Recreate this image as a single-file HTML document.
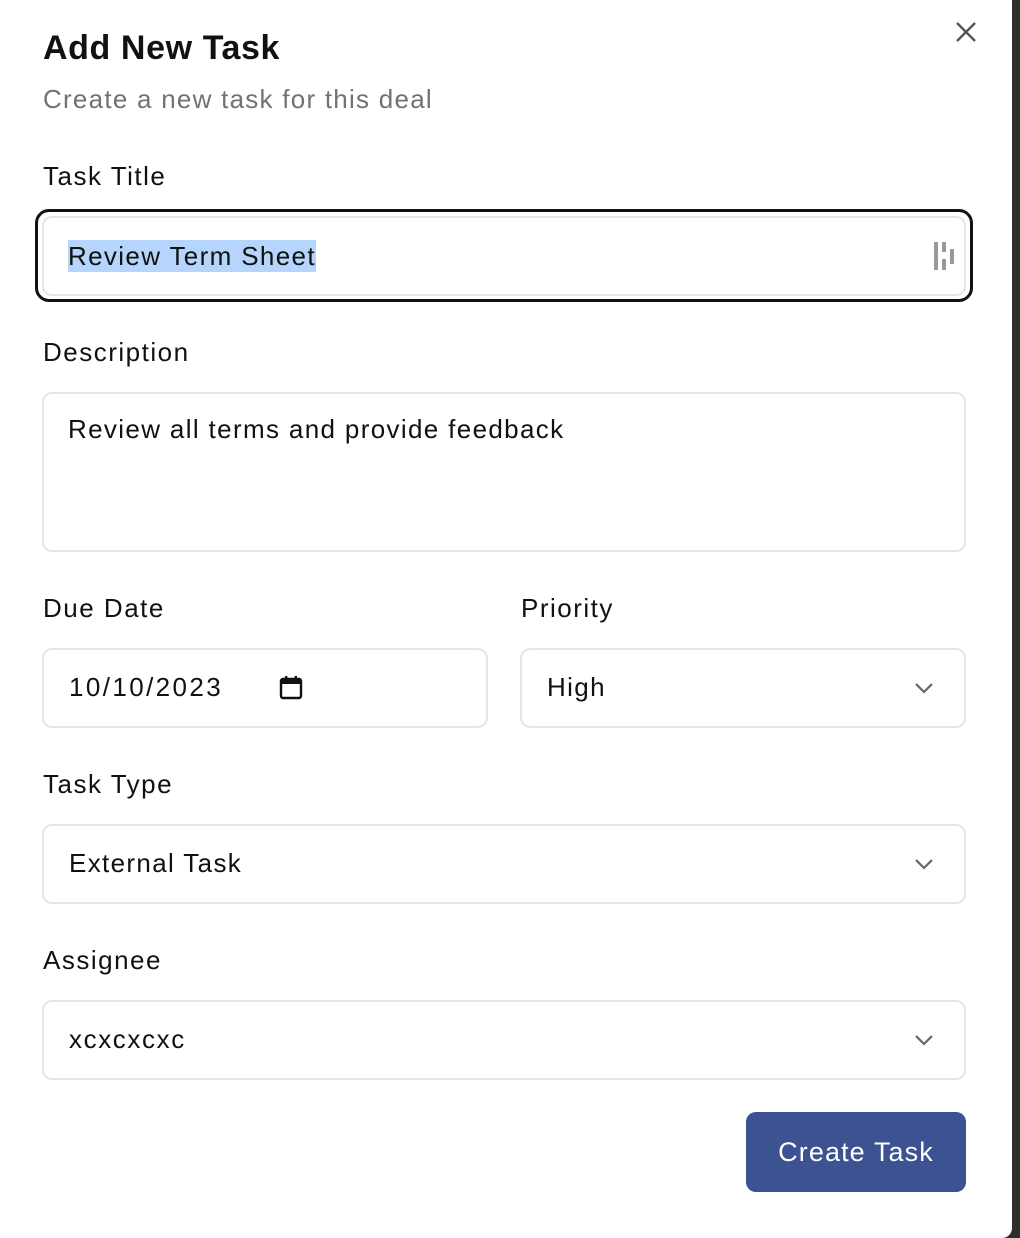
<!DOCTYPE html>
<html><head><style>
*{margin:0;padding:0;box-sizing:border-box}
body{width:1020px;height:1238px;background:#fff;font-family:"Liberation Sans",sans-serif;color:#111;position:relative;overflow:hidden}
.a{position:absolute;white-space:nowrap}
.lbl{font-size:26px;color:#111;letter-spacing:1.5px}
.box{position:absolute;border:2px solid #e5e5e5;border-radius:10px;background:#fff}
.txt{font-size:26px;color:#111;letter-spacing:1.35px}
.chev{position:absolute;width:24px;height:24px}
</style></head><body>
<div style="position:absolute;right:0;top:0;width:8px;height:1238px;background:#2e2e2e"></div>
<div style="position:absolute;right:8px;bottom:0;width:10px;height:10px;background:#fff;border-bottom-right-radius:10px;box-shadow:4px 4px 0 4px #2e2e2e"></div>

<div class="a" style="left:43px;top:29px;font-size:34px;font-weight:bold;letter-spacing:0.6px">Add New Task</div>
<div class="a" style="left:43px;top:84px;font-size:26px;color:#76716c;letter-spacing:1.25px">Create a new task for this deal</div>
<svg class="a" style="left:954px;top:20px" width="24" height="24" viewBox="0 0 24 24"><path d="M3 3L21 21M21 3L3 21" stroke="#555" stroke-width="2.4"/></svg>

<div class="a lbl" style="left:43px;top:161px">Task Title</div>
<div style="position:absolute;left:35px;top:209px;width:938px;height:93px;border:3px solid #111;border-radius:14px"></div>
<div class="box" style="left:42px;top:216px;width:924px;height:80px"></div>
<div class="a" style="left:68px;top:240px;width:248px;height:32px;background:#b5d5fc"></div>
<div class="a txt" style="left:68px;top:240px;line-height:32px">Review Term Sheet</div>
<svg class="a" style="left:930px;top:240px" width="30" height="34"><rect x="4" y="2" width="4" height="28" fill="#9a9794"/><rect x="12" y="2" width="4" height="10" fill="#9a9794"/><rect x="12" y="19" width="4" height="11" fill="#9a9794"/><rect x="20" y="9" width="4" height="15" fill="#9a9794"/></svg>

<div class="a lbl" style="left:43px;top:337px">Description</div>
<div class="box" style="left:42px;top:392px;width:924px;height:160px"></div>
<div class="a txt" style="left:68px;top:414px">Review all terms and provide feedback</div>

<div class="a lbl" style="left:43px;top:593px">Due Date</div>
<div class="a lbl" style="left:521px;top:593px">Priority</div>
<div class="box" style="left:42px;top:648px;width:446px;height:80px"></div>
<div class="a txt" style="left:69px;top:672px;letter-spacing:2.4px">10/10/2023</div>
<svg class="a" style="left:279px;top:675px" width="24" height="26" viewBox="0 0 24 26"><rect x="2" y="4" width="20" height="19" rx="2" fill="none" stroke="#111" stroke-width="2.4"/><rect x="2" y="4" width="20" height="5" fill="#111"/><rect x="6" y="1" width="2.4" height="5" fill="#111"/><rect x="15.6" y="1" width="2.4" height="5" fill="#111"/></svg>
<div class="box" style="left:520px;top:648px;width:446px;height:80px"></div>
<div class="a txt" style="left:547px;top:672px">High</div>
<svg class="chev" style="left:912px;top:676px" viewBox="0 0 24 24"><path d="M4 8L12 16L20 8" fill="none" stroke="#666" stroke-width="2.2"/></svg>

<div class="a lbl" style="left:43px;top:769px">Task Type</div>
<div class="box" style="left:42px;top:824px;width:924px;height:80px"></div>
<div class="a txt" style="left:69px;top:848px">External Task</div>
<svg class="chev" style="left:912px;top:852px" viewBox="0 0 24 24"><path d="M4 8L12 16L20 8" fill="none" stroke="#666" stroke-width="2.2"/></svg>

<div class="a lbl" style="left:43px;top:945px">Assignee</div>
<div class="box" style="left:42px;top:1000px;width:924px;height:80px"></div>
<div class="a txt" style="left:69px;top:1024px;letter-spacing:1.6px">xcxcxcxc</div>
<svg class="chev" style="left:912px;top:1028px" viewBox="0 0 24 24"><path d="M4 8L12 16L20 8" fill="none" stroke="#666" stroke-width="2.2"/></svg>

<div class="a" style="left:746px;top:1112px;width:220px;height:80px;background:#3c5291;border-radius:10px;color:#fff;font-size:27px;line-height:80px;text-align:center;letter-spacing:1.1px">Create Task</div>
</body></html>
